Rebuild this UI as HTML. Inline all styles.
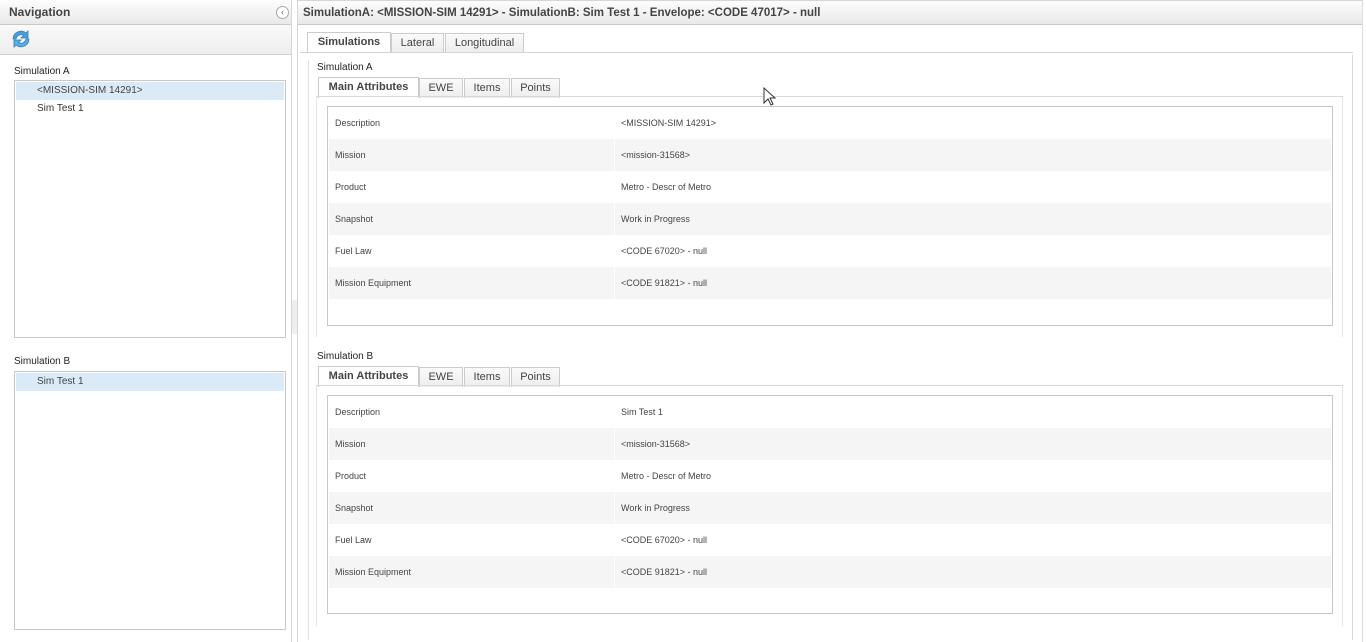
<!DOCTYPE html>
<html><head><style>
*{margin:0;padding:0;box-sizing:border-box}
body{width:1366px;height:642px;background:#fff;font-family:"Liberation Sans",Tahoma,sans-serif;position:relative;overflow:hidden;color:#333}
.a{position:absolute}
.hdr{background:linear-gradient(#fdfdfd,#e9e9e9);border-bottom:1px solid #c8c8c8;font-weight:bold;font-size:12px;color:#444;line-height:24px}
.lbl{font-size:10px;color:#222}
.list{border:1px solid #c8c8c8;background:#fff}
.row{position:absolute;left:1px;right:1px;height:18px;font-size:10px;line-height:18px;padding-left:21px;color:#333}
.sel{background:#daebf7;color:#444}
.tab{position:absolute;height:20px;border:1px solid #ccc;border-bottom:none;background:linear-gradient(#fafafa,#ededed);font-size:11px;line-height:19px;text-align:center;color:#444}
.tab.on{background:#fff;font-weight:bold;height:21px}
.grid{border:1px solid #c6c6c6;background:#fff}
.gr{position:absolute;left:1px;right:1px;height:32px;font-size:9px;line-height:32px;color:#444}
.gr.alt{background:#f5f5f5}
.gr span{position:absolute}
.gr .k{left:6px}.gr .v{left:292px}
.gr.alt:after{content:"";position:absolute;left:285px;top:0;width:1px;height:32px;background:#fff}
</style></head><body>
<!-- Left nav -->
<div class="a hdr" style="left:0;top:0;width:292px;height:25px;padding-left:9px">Navigation</div>
<div class="a" style="left:276px;top:6px;width:13px;height:13px;border:1px solid #aaa;border-radius:50%;background:#fff;font-size:9px;line-height:11px;text-align:center;color:#666">‹</div>
<div class="a" style="left:0;top:25px;width:292px;height:30px;background:linear-gradient(#fafafa,#eee);border-bottom:1px solid #d0d0d0"></div>
<svg class="a" style="left:9px;top:28px" width="24" height="22" viewBox="0 0 24 22">
<path d="M4 11a8 8 0 0 1 13-6l2-2v7h-7l2.5-2.5A5 5 0 0 0 7 11z" fill="#4a9fd8" stroke="#2f7fbf" stroke-width=".8"/>
<path d="M20 11a8 8 0 0 1-13 6l-2 2v-7h7l-2.5 2.5A5 5 0 0 0 17 11z" fill="#5aaee2" stroke="#2f7fbf" stroke-width=".8"/>
</svg>
<div class="a" style="left:291px;top:0;width:1px;height:642px;background:#d6d6d6"></div>
<div class="a" style="left:292px;top:300px;width:6px;height:34px;background:#eee"></div>
<div class="a" style="left:297px;top:0;width:1px;height:642px;background:#d6d6d6"></div>

<div class="a lbl" style="left:14px;top:66px">Simulation A</div>
<div class="a list" style="left:14px;top:80px;width:272px;height:258px">
 <div class="row sel" style="top:1px">&lt;MISSION-SIM 14291&gt;</div>
 <div class="row" style="top:19px">Sim Test 1</div>
</div>
<div class="a lbl" style="left:14px;top:356px">Simulation B</div>
<div class="a list" style="left:14px;top:371px;width:272px;height:259px">
 <div class="row sel" style="top:1px">Sim Test 1</div>
</div>

<!-- Right -->
<div class="a hdr" style="left:298px;top:0;width:1064px;height:25px;padding-left:5px;border-top:1px solid #d6d6d6;line-height:24px;font-size:11.5px">SimulationA: &lt;MISSION-SIM 14291&gt; - SimulationB: Sim Test 1 - Envelope: &lt;CODE 47017&gt; - null</div>
<div class="a" style="left:1362px;top:0;width:1px;height:642px;background:#ddd"></div>

<div class="tab on" style="left:307px;top:32px;width:84px">Simulations</div>
<div class="tab" style="left:391px;top:33px;width:53px">Lateral</div>
<div class="tab" style="left:445px;top:33px;width:79px">Longitudinal</div>
<div class="a" style="left:300px;top:52px;width:1053px;height:1px;background:#d4d4d4"></div>
<div class="a" style="left:391px;top:52px;width:0"></div>
<div class="a" style="left:308px;top:60px;width:1px;height:580px;background:#e0e0e0"></div>
<div class="a" style="left:1352px;top:55px;width:1px;height:585px;background:#d8d8d8"></div>

<!-- Sim A -->
<div class="a lbl" style="left:317px;top:62px">Simulation A</div>
<div class="tab on" style="left:318px;top:77px;width:101px">Main Attributes</div>
<div class="tab" style="left:419px;top:78px;width:44px">EWE</div>
<div class="tab" style="left:464px;top:78px;width:46px">Items</div>
<div class="tab" style="left:511px;top:78px;width:49px">Points</div>
<div class="a" style="left:316px;top:96px;width:1027px;height:1px;background:#d8d8d8"></div>
<div class="a" style="left:316px;top:97px;width:1px;height:240px;background:#e4e4e4"></div>
<div class="a" style="left:1342px;top:97px;width:1px;height:240px;background:#e4e4e4"></div>
<div class="a grid" style="left:327px;top:106px;width:1006px;height:220px">
 <div class="gr" style="top:0"><span class="k">Description</span><span class="v">&lt;MISSION-SIM 14291&gt;</span></div>
 <div class="gr alt" style="top:32px"><span class="k">Mission</span><span class="v">&lt;mission-31568&gt;</span></div>
 <div class="gr" style="top:64px"><span class="k">Product</span><span class="v">Metro - Descr of Metro</span></div>
 <div class="gr alt" style="top:96px"><span class="k">Snapshot</span><span class="v">Work in Progress</span></div>
 <div class="gr" style="top:128px"><span class="k">Fuel Law</span><span class="v">&lt;CODE 67020&gt; - null</span></div>
 <div class="gr alt" style="top:160px"><span class="k">Mission Equipment</span><span class="v">&lt;CODE 91821&gt; - null</span></div>
</div>

<!-- Sim B -->
<div class="a lbl" style="left:317px;top:351px">Simulation B</div>
<div class="tab on" style="left:318px;top:366px;width:101px">Main Attributes</div>
<div class="tab" style="left:419px;top:367px;width:44px">EWE</div>
<div class="tab" style="left:464px;top:367px;width:46px">Items</div>
<div class="tab" style="left:511px;top:367px;width:49px">Points</div>
<div class="a" style="left:316px;top:385px;width:1027px;height:1px;background:#d8d8d8"></div>
<div class="a" style="left:316px;top:386px;width:1px;height:240px;background:#e4e4e4"></div>
<div class="a" style="left:1342px;top:386px;width:1px;height:240px;background:#e4e4e4"></div>
<div class="a grid" style="left:327px;top:395px;width:1006px;height:219px">
 <div class="gr" style="top:0"><span class="k">Description</span><span class="v">Sim Test 1</span></div>
 <div class="gr alt" style="top:32px"><span class="k">Mission</span><span class="v">&lt;mission-31568&gt;</span></div>
 <div class="gr" style="top:64px"><span class="k">Product</span><span class="v">Metro - Descr of Metro</span></div>
 <div class="gr alt" style="top:96px"><span class="k">Snapshot</span><span class="v">Work in Progress</span></div>
 <div class="gr" style="top:128px"><span class="k">Fuel Law</span><span class="v">&lt;CODE 67020&gt; - null</span></div>
 <div class="gr alt" style="top:160px"><span class="k">Mission Equipment</span><span class="v">&lt;CODE 91821&gt; - null</span></div>
</div>

<!-- cursor -->
<svg class="a" style="left:763px;top:87px" width="14" height="20" viewBox="0 0 14 20"><path d="M1 1v15l4-4 3 6 2-1-3-6h5z" fill="#fff" stroke="#333" stroke-width="1"/></svg>
</body></html>
